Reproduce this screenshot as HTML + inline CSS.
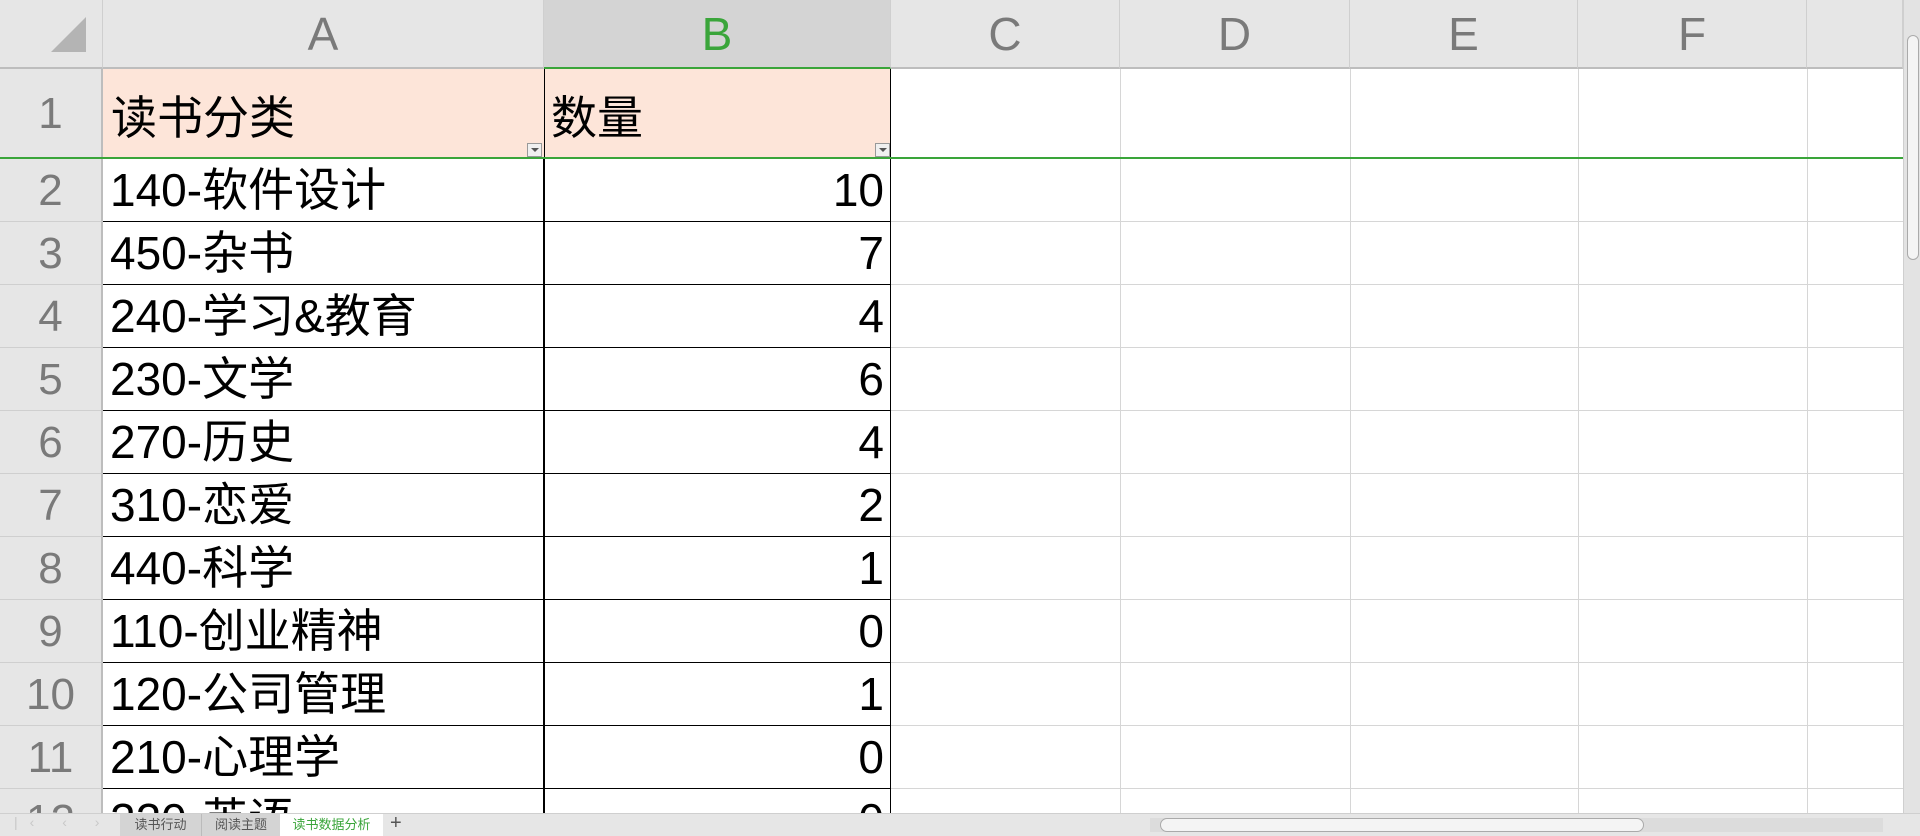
<!DOCTYPE html>
<html><head><meta charset="utf-8"><style>
*{margin:0;padding:0;box-sizing:border-box}
html,body{width:1920px;height:836px;overflow:hidden}
body{background:#fff;position:relative;font-family:"Liberation Sans","Noto Sans CJK SC",sans-serif}
.a{position:absolute}
.ch{position:absolute;top:0;height:69px;background:#e6e6e6;border-right:1px solid #cfcfcf;border-bottom:2px solid #bdbdbd;color:#7a7a7a;font-size:46px;text-align:center;line-height:69px}
.rh{position:absolute;left:0;width:103px;background:#e6e6e6;border-right:2px solid #bdbdbd;border-bottom:1px solid #cfcfcf;color:#7a7a7a;font-size:44px;text-align:center}
.vl{position:absolute;top:69px;height:744px;width:1px;background:#d6d6d6}
.hl{position:absolute;left:891px;right:17px;height:1px;background:#d6d6d6}
.c{position:absolute;font-size:46px;color:#000;white-space:nowrap;border-right:1px solid #000;border-bottom:1px solid #000}
.dd{position:absolute;width:15px;height:14px;border:1px solid #999;background:#f0f0f0}
.dd:after{content:"";position:absolute;left:3px;top:4px;border-left:4px solid transparent;border-right:4px solid transparent;border-top:4px solid #555}
#rows{position:absolute;left:0;top:0;width:1920px;height:813px;overflow:hidden}
</style></head><body>
<div class="ch" style="left:0;width:103px"><div class="a" style="left:51px;top:17px;width:0;height:0;border-left:35px solid transparent;border-bottom:35px solid #b4b4b4"></div></div>
<div class="ch" style="left:103px;width:441px">A</div>
<div class="ch" style="left:544px;width:347px;background:#d4d4d4;color:#3aa53a;border-bottom:2px solid #3aa53a">B</div>
<div class="ch" style="left:891px;width:229px">C</div>
<div class="ch" style="left:1120px;width:230px">D</div>
<div class="ch" style="left:1350px;width:228px">E</div>
<div class="ch" style="left:1578px;width:229px">F</div>
<div class="ch" style="left:1807px;width:96px"></div>
<div class="vl" style="left:1120px"></div><div class="vl" style="left:1350px"></div><div class="vl" style="left:1578px"></div><div class="vl" style="left:1807px"></div>
<div class="hl" style="top:221px"></div><div class="hl" style="top:284px"></div><div class="hl" style="top:347px"></div><div class="hl" style="top:410px"></div><div class="hl" style="top:473px"></div><div class="hl" style="top:536px"></div><div class="hl" style="top:599px"></div><div class="hl" style="top:662px"></div><div class="hl" style="top:725px"></div><div class="hl" style="top:788px"></div>
<div class="rh" style="top:69px;height:89px;line-height:89px">1</div>
<div class="a" style="left:103px;top:69px;width:441px;height:89px;background:#fde5d9;font-size:46px;line-height:98px;padding-left:8px">读书分类</div>
<div class="a" style="left:544px;top:69px;width:347px;height:89px;background:#fde5d9;border-left:1px solid #000;border-right:1px solid #000;font-size:46px;line-height:98px;padding-left:6px">数量</div>
<div class="dd" style="left:527px;top:143px"></div>
<div class="dd" style="left:875px;top:143px"></div>
<div class="a" style="left:0;top:157px;width:1903px;height:2px;background:#3aa53a"></div>
<div id="rows"></div>
<script>
var d=[["140-软件设计",10],["450-杂书",7],["240-学习&教育",4],["230-文学",6],["270-历史",4],["310-恋爱",2],["440-科学",1],["110-创业精神",0],["120-公司管理",1],["210-心理学",0],["220-英语",0]];
var h="";
for(var i=0;i<d.length;i++){var t=159+i*63;
h+='<div class="rh" style="top:'+t+'px;height:63px;line-height:63px">'+(i+2)+'</div>';
h+='<div class="c" style="left:103px;top:'+t+'px;width:441px;height:63px;line-height:63px;padding-left:7px">'+d[i][0]+'</div>';
h+='<div class="c" style="left:544px;top:'+t+'px;width:347px;height:63px;line-height:63px;text-align:right;padding-right:6px;border-left:1px solid #000">'+d[i][1]+'</div>';}
document.getElementById("rows").innerHTML=h;
</script>
<div class="a" style="left:1903px;top:0;width:17px;height:813px;background:#e3e3e3;border-left:1px solid #cfcfcf"></div>
<div class="a" style="left:1907px;top:35px;width:12px;height:225px;background:#f4f4f4;border:1px solid #aaa;border-radius:6px"></div>
<div class="a" style="left:0;top:813px;width:1920px;height:23px;background:#e6e6e6;border-top:1px solid #cfcfcf"></div>
<div class="a" style="left:14px;top:814px;font-size:14px;color:#c8c8c8;letter-spacing:12px">|‹ ‹ › ›|</div>
<div class="a" style="left:120px;top:814px;width:81px;height:22px;background:#d4d4d4;font-size:13px;color:#555;text-align:center;line-height:22px">读书行动</div>
<div class="a" style="left:201px;top:814px;width:79px;height:22px;background:#d4d4d4;border-left:1px solid #bbb;font-size:13px;color:#555;text-align:center;line-height:22px">阅读主题</div>
<div class="a" style="left:280px;top:814px;width:103px;height:22px;background:#fff;font-size:13px;color:#3aa53a;text-align:center;line-height:22px">读书数据分析</div>
<div class="a" style="left:390px;top:812px;font-size:20px;color:#555">+</div>
<div class="a" style="left:1150px;top:818px;width:733px;height:14px;background:#dcdcdc"></div>
<div class="a" style="left:1160px;top:818px;width:484px;height:14px;background:#f4f4f4;border:1px solid #aaa;border-radius:7px"></div>
</body></html>
